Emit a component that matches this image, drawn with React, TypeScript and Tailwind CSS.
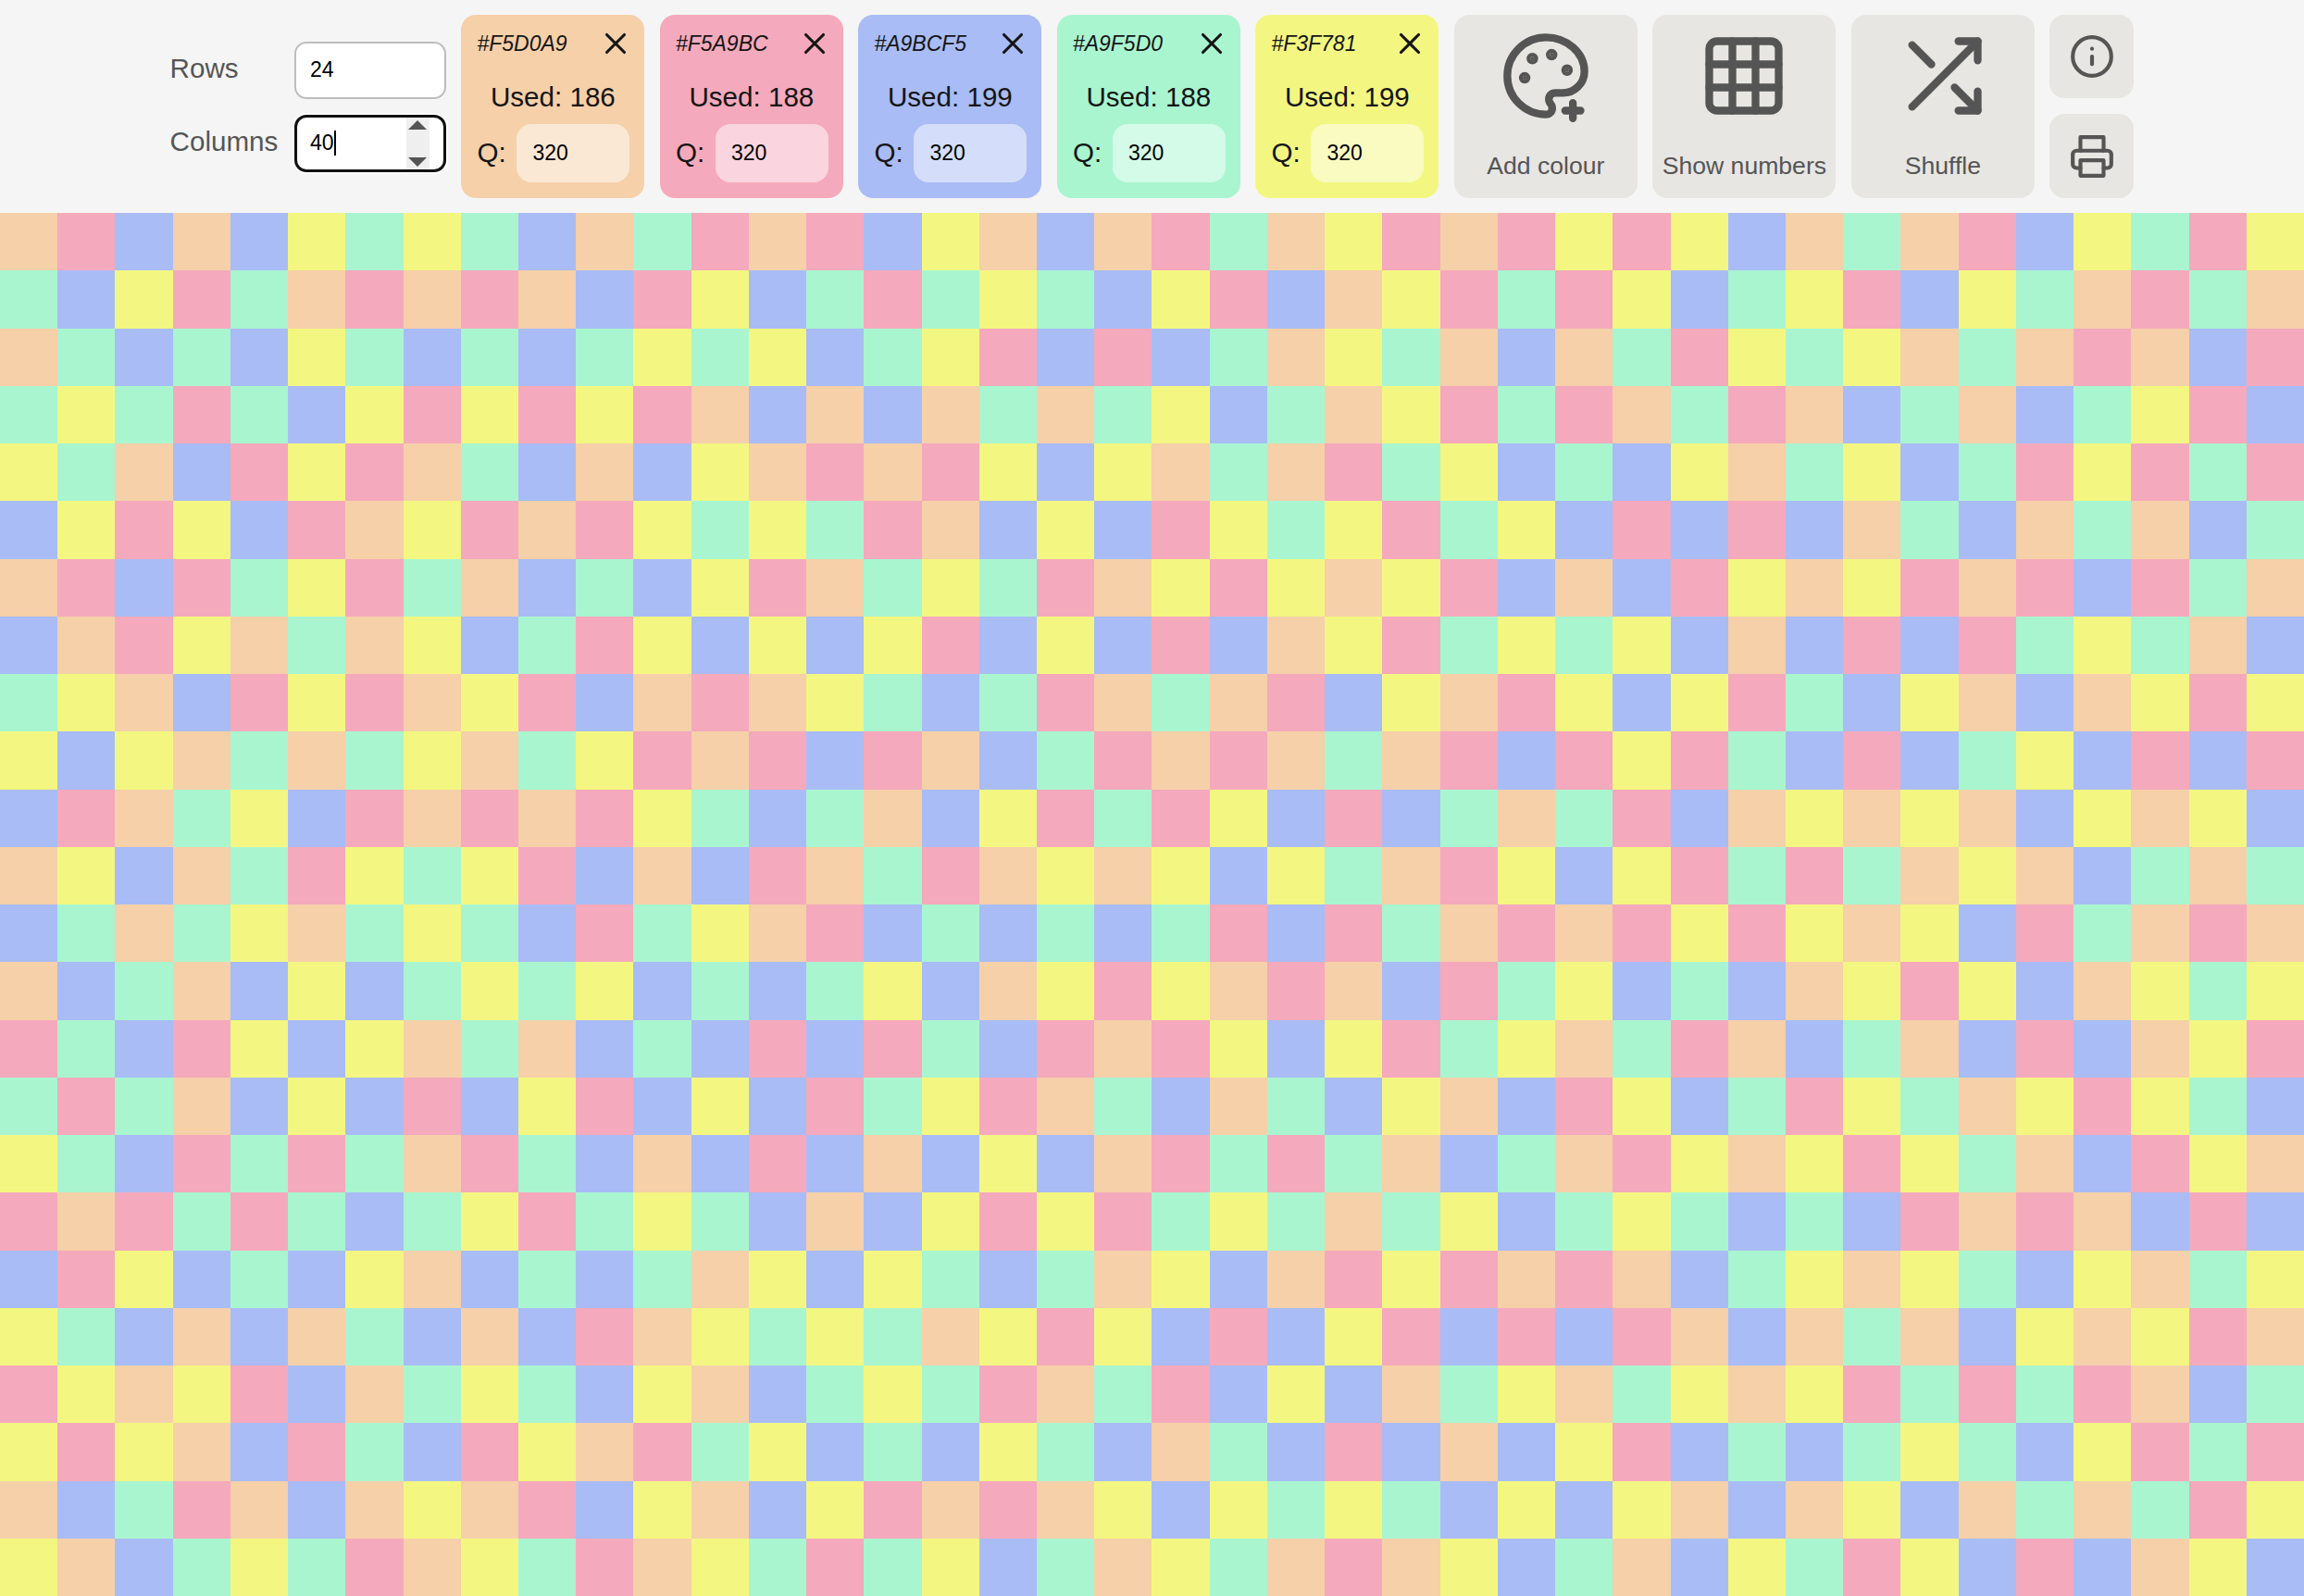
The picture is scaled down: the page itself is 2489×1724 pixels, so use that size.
import { X } from 'lucide-react';

const swatches = [
    { hex: '#F5D0A9', used: 186, card: 'bg-[#F5D0A9]' },
    { hex: '#F5A9BC', used: 188, card: 'bg-[#F5A9BC]' },
    { hex: '#A9BCF5', used: 199, card: 'bg-[#A9BCF5]' },
    { hex: '#A9F5D0', used: 188, card: 'bg-[#A9F5D0]' },
    { hex: '#F3F781', used: 199, card: 'bg-[#F3F781]' },
];

const cellColours: Record<string, string> = {
    O: 'bg-[#F5D0A9]',
    P: 'bg-[#F5A9BC]',
    B: 'bg-[#A9BCF5]',
    G: 'bg-[#A9F5D0]',
    Y: 'bg-[#F3F781]',
};

const rows = [
    'OPBOBYGYGBOGPOPBYOBOPGOYPOPYPYBOGOPBYGPY',
    'GBYPGOPOPOBPYBGPGYGBYPBOYPGPYBGYPBYGOPGO',
    'OGBGBYGBGBGYGYBGYPBPBGOYGOBOGPYGYOGOPOBP',
    'GYGPGBYPYPYPOBOBOGOGYBGOYPGPOGPOBGOBGYPB',
    'YGOBPYPOGBOBYOPOPYBYOGOPGYBGBYOGYBGPYPGP',
    'BYPYBPOYPOPYGYGPOBYBPYGYPGYBPBPBOGBOGOBG',
    'OPBPGYPGOBGBYPOGYGPOYPYOYPBOBPYOYPOPBPGO',
    'BOPYOGOYBGPYBYBYPBYBPBOYPGYGYBOBPBPGYGOB',
    'GYOBPYPOYPBOPOYGBGPOGOPBYOPYBYPGBYOBOYPY',
    'YBYOGOGYOGYPOPBPOBGPOPOGOPBPYPGBPBGYBPBP',
    'BPOGYBPOPOPYGBGOBYPGPYBPBGOGPBOYOYOBYOYB',
    'OYBOGPYGYPBOBPOGPOYOYBYGOPYBYPGPGOYOBGOG',
    'BGOGYOGYGBPGYOPBGBGBGPBPGOPOPYPYOYBPGOPO',
    'OBGOBYBGYGYBGBGYBOYPYOPOBPGYBGBOYPYBOYGY',
    'PGBPYBYOGOBGBPBPGBPOPYBYPGYOGPOBGOBPBOYP',
    'GPGOBYBPBYPBYBPGYPOGBOGBYOBPYBGPYGOYPYGB',
    'YGBPGPGOPGBOBPBOBYBOPGPGOBGOPYOYPYGOBPYO',
    'POPGPGBGYPGYGBOBYPYPGYGOGYBGYGBGBPOPOBPB',
    'BPYBGBYOBGBGOYBYGBGOYBOPYPOPOBGYOYGBYOGY',
    'YGBOBOGBOBPOYGYGOYPYBPBYPBPBPOBOGOBYOYPO',
    'PYOYPBOGYGBYOBGYGPOGPBYBOGYOGYOYPGPGPOBG',
    'YPYOBPGBPYOPGYBGBYGBOGBPBOBYPBGBGYGBYPGP',
    'OBGPOBOYOPBYOBYPOPOYBYGYGBYBYOBOYBOGOGPY',
    'YOBGYGPOYGPOYGPGYBGOYGOPOYBGOBYGPYBPBOYB',
];

const fieldText = "text-[23px] text-black font-['Liberation_Sans',Arial,sans-serif] outline-none";

function PaletteIcon() {
    return (
        <svg width="100" height="100" viewBox="0 0 24 24" fill="none" stroke="currentColor" strokeWidth="2" strokeLinecap="round" strokeLinejoin="round">
            <circle cx="13.5" cy="6.5" r=".5" fill="currentColor" />
            <circle cx="17.5" cy="10.5" r=".5" fill="currentColor" />
            <circle cx="8.5" cy="7.5" r=".5" fill="currentColor" />
            <circle cx="6.5" cy="12.5" r=".5" fill="currentColor" />
            <path d="M12 2C6.5 2 2 6.5 2 12s4.5 10 10 10c.926 0 1.648-.746 1.648-1.688 0-.437-.18-.835-.437-1.125-.29-.289-.438-.652-.438-1.125a1.64 1.64 0 0 1 1.668-1.668h1.996c3.051 0 5.555-2.503 5.555-5.554C21.965 6.012 17.461 2 12 2z" />
            <path d="M17 21h4M19 19v4" />
        </svg>
    );
}

function GridIcon() {
    return (
        <svg width="100" height="100" viewBox="0 0 24 24" fill="none" stroke="currentColor" strokeWidth="2" strokeLinecap="round" strokeLinejoin="round">
            <rect x="3" y="3" width="18" height="18" rx="2" />
            <path d="M3 9h18M3 15h18M9 3v18M15 3v18" />
        </svg>
    );
}

function ShuffleIcon() {
    return (
        <svg width="100" height="100" viewBox="0 0 24 24" fill="none" stroke="currentColor" strokeWidth="2" strokeLinecap="round" strokeLinejoin="round">
            <polyline points="16 3 21 3 21 8" />
            <line x1="4" y1="20" x2="21" y2="3" />
            <polyline points="21 16 21 21 16 21" />
            <line x1="15" y1="15" x2="21" y2="21" />
            <line x1="4" y1="4" x2="9" y2="9" />
        </svg>
    );
}

function InfoIcon() {
    return (
        <svg width="50" height="50" viewBox="0 0 24 24" fill="none" stroke="currentColor" strokeWidth="2" strokeLinecap="round" strokeLinejoin="round">
            <circle cx="12" cy="12" r="10" />
            <line x1="12" y1="16" x2="12" y2="12" />
            <line x1="12" y1="8" x2="12.01" y2="8" />
        </svg>
    );
}

function PrinterIcon() {
    return (
        <svg width="50" height="50" viewBox="0 0 24 24" fill="none" stroke="currentColor" strokeWidth="2" strokeLinecap="round" strokeLinejoin="round">
            <polyline points="6 9 6 2 18 2 18 9" />
            <path d="M6 18H4a2 2 0 0 1-2-2v-5a2 2 0 0 1 2-2h16a2 2 0 0 1 2 2v5a2 2 0 0 1-2 2h-2" />
            <rect x="6" y="14" width="12" height="8" />
        </svg>
    );
}

const actions = [
    { label: 'Add colour', icon: PaletteIcon },
    { label: 'Show numbers', icon: GridIcon },
    { label: 'Shuffle', icon: ShuffleIcon },
];

export default function App() {
    return (
        <div className="h-[1724px] overflow-hidden bg-[#f5f5f5] font-['Liberation_Sans',Arial,sans-serif]">
            <header className="flex h-[230px] justify-center gap-[16.5px] pt-4">
                {/* Grid size */}
                <div className="grid h-[198px] grid-cols-[auto_164px] content-center items-center gap-x-[17.5px] gap-y-[17px] text-[29.6px] text-[#555]">
                    <label className="pb-[2px]">Rows</label>
                    <div className="flex h-[62px] items-center rounded-[13px] border-2 border-[#bdbdbd] bg-white pl-[15px]">
                        <input readOnly defaultValue="24" className={`w-full ${fieldText}`} />
                    </div>
                    <label className="pb-[2px]">Columns</label>
                    <div className="relative flex h-[62px] items-center rounded-[13px] border-[3px] border-[#111] bg-white pl-[14px] ring-2 ring-white">
                        <input readOnly defaultValue="40" className={`w-[26px] ${fieldText}`} />
                        <span className="h-[27px] w-[2px] bg-black" />
                        {/* Number spinner */}
                        <div className="absolute top-0 right-[15px] flex h-full w-[25px] flex-col items-center justify-between bg-[#efefef] py-[3px]">
                            <span className="h-0 w-0 border-x-[10px] border-b-[10px] border-x-transparent border-b-[#555]" />
                            <span className="h-0 w-0 border-x-[10px] border-t-[10px] border-x-transparent border-t-[#555]" />
                        </div>
                    </div>
                </div>

                {/* Colour cards */}
                {swatches.map((s) => (
                    <div key={s.hex} className={`flex h-[198px] w-[198px] flex-col rounded-[16px] pt-3 pr-3 pb-[17px] pl-[17px] text-[#151515] ${s.card}`}>
                        <div className="flex items-center justify-between">
                            <span className="text-[23px] italic">{s.hex}</span>
                            <X size={38} strokeWidth={2} />
                        </div>
                        <p className="mt-[22px] -ml-[5px] text-center text-[29.6px] leading-[34px]">Used: {s.used}</p>
                        <div className="mt-3 flex items-center justify-between pr-1">
                            <span className="text-[29.6px]">Q:</span>
                            <input readOnly defaultValue="320" className={`h-[63px] w-[122px] rounded-[16px] bg-white/50 pl-[17px] ${fieldText}`} />
                        </div>
                    </div>
                ))}

                {/* Actions */}
                {actions.map((a) => (
                    <button key={a.label} className="flex h-[198px] w-[198px] flex-col items-center rounded-[16px] bg-[#e7e6e2] pt-4 text-[#555]">
                        <a.icon />
                        <span className="mt-[31px] text-[26.6px] leading-[32px]">{a.label}</span>
                    </button>
                ))}

                <div className="flex h-[198px] w-[91px] flex-col gap-[17px]">
                    <button className="flex h-[90px] items-center justify-center rounded-[16px] bg-[#e7e6e2] text-[#555]">
                        <InfoIcon />
                    </button>
                    <button className="flex h-[91px] items-center justify-center rounded-[16px] bg-[#e7e6e2] text-[#555]">
                        <PrinterIcon />
                    </button>
                </div>
            </header>

            {/* Quilt */}
            <main className="grid h-[1494px] grid-cols-[repeat(40,minmax(0,1fr))] grid-rows-[repeat(24,minmax(0,1fr))]">
                {rows.map((row, r) =>
                    row.split('').map((c, i) => <div key={`${r}-${i}`} className={cellColours[c]} />)
                )}
            </main>
        </div>
    );
}
